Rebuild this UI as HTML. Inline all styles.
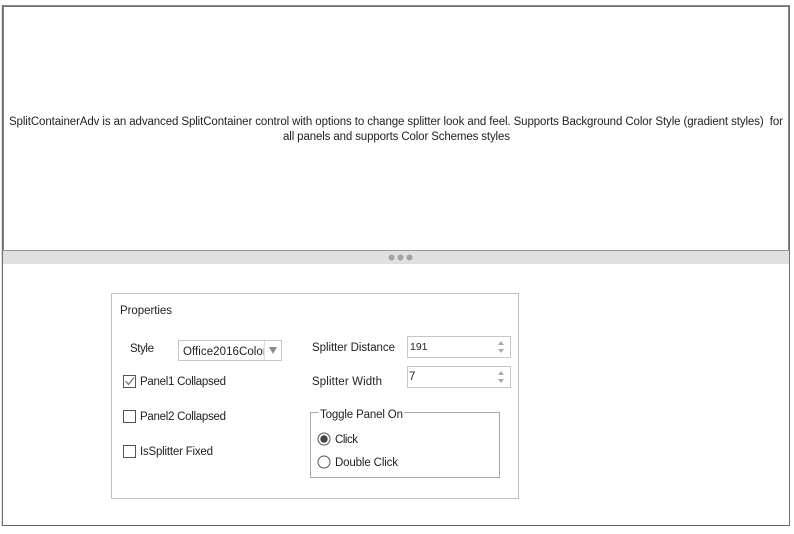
<!DOCTYPE html>
<html><head><meta charset="utf-8"><style>
html,body{margin:0;padding:0;background:#fff;width:794px;height:534px;overflow:hidden}
svg{display:block}
text{font-family:"Liberation Sans",sans-serif;font-size:11.5px;fill:#222;white-space:pre}
</style></head><body>
<svg width="794" height="534" viewBox="0 0 794 534" xmlns="http://www.w3.org/2000/svg" shape-rendering="crispEdges">
<rect width="794" height="534" fill="#fff"/>
<rect x="1" y="5" width="1" height="521" fill="#dcdcdc"/>
<rect x="2" y="5" width="788" height="1" fill="#8c8c8c"/>
<rect x="2" y="6" width="788" height="1" fill="#707070"/>
<rect x="2" y="5" width="1" height="521" fill="#707070"/>
<rect x="3" y="6" width="1" height="245" fill="#808080"/>
<rect x="789" y="5" width="1" height="521" fill="#707070"/>
<rect x="788" y="6" width="1" height="245" fill="#808080"/>
<rect x="2" y="525" width="788" height="1" fill="#666"/>
<rect x="3" y="251" width="786" height="13" fill="#e0e0e0"/>
<rect x="3" y="250" width="786" height="1" fill="#999"/>
<g shape-rendering="auto" fill="#a3a3a3"><circle cx="391.500" cy="257.500" r="3"/><circle cx="400.500" cy="257.500" r="3"/><circle cx="409.500" cy="257.500" r="3"/></g>
<text x="9" y="125" textLength="774" lengthAdjust="spacing">SplitContainerAdv is an advanced SplitContainer control with options to change splitter look and feel. Supports Background Color Style (gradient styles)  for</text>
<text x="283" y="140" textLength="227" lengthAdjust="spacing">all panels and supports Color Schemes styles</text>
<rect x="111.500" y="293.500" width="407" height="205" fill="#fff" stroke="#c0c0c0"/>
<text x="120" y="314" textLength="52" lengthAdjust="spacing">Properties</text>
<text x="130" y="352" textLength="24" lengthAdjust="spacing">Style</text>
<rect x="178.500" y="340.500" width="103" height="20" fill="#fff" stroke="#c6c6c6"/>
<rect x="264" y="341" width="1" height="19" fill="#e0e0e0"/>
<svg x="183" y="342" width="81" height="18"><text x="0" y="13" textLength="96" lengthAdjust="spacing">Office2016Colorful</text></svg>
<path d="M269 347h8l-4 7z" fill="#8a8a8a" shape-rendering="auto"/>
<rect x="123.500" y="375.500" width="12" height="12" fill="#fff" stroke="#555"/>
<path d="M125.500 381l3 3.500 5.500-7" fill="none" stroke="#777" stroke-width="1.300" shape-rendering="auto"/>
<text x="140" y="385" textLength="86" lengthAdjust="spacing">Panel1 Collapsed</text>
<rect x="123.500" y="410.500" width="12" height="12" fill="#fff" stroke="#555"/>
<text x="140" y="420" textLength="86" lengthAdjust="spacing">Panel2 Collapsed</text>
<rect x="123.500" y="445.500" width="12" height="12" fill="#fff" stroke="#555"/>
<text x="140" y="455" textLength="73" lengthAdjust="spacing">IsSplitter Fixed</text>
<text x="312" y="351" textLength="83" lengthAdjust="spacing">Splitter Distance</text>
<text x="312" y="385" textLength="70" lengthAdjust="spacing">Splitter Width</text>
<rect x="407.500" y="336.500" width="103" height="21" fill="#fff" stroke="#c6c6c6"/>
<rect x="407.500" y="366.500" width="103" height="21" fill="#fff" stroke="#c6c6c6"/>
<text x="410" y="350" style="font-size:10.500px">191</text>
<text x="409" y="380">7</text>
<g fill="#a8a8a8" shape-rendering="auto">
<path d="M501 341l3 4h-6z"/><path d="M501 353l3-4h-6z"/>
<path d="M501 371l3 4h-6z"/><path d="M501 383l3-4h-6z"/>
</g>
<rect x="310.500" y="412.500" width="189" height="65" fill="#fff" stroke="#a8a8a8"/>
<rect x="318" y="410" width="86" height="5" fill="#fff"/>
<text x="320" y="418" textLength="83" lengthAdjust="spacing">Toggle Panel On</text>
<g shape-rendering="auto">
<circle cx="324" cy="439" r="6" fill="#fff" stroke="#555"/>
<circle cx="324" cy="439" r="3.700" fill="#444"/>
<circle cx="324" cy="462" r="6" fill="#fff" stroke="#555"/>
</g>
<text x="335" y="443" textLength="23" lengthAdjust="spacing">Click</text>
<text x="335" y="466" textLength="63" lengthAdjust="spacing">Double Click</text>
</svg>
</body></html>
